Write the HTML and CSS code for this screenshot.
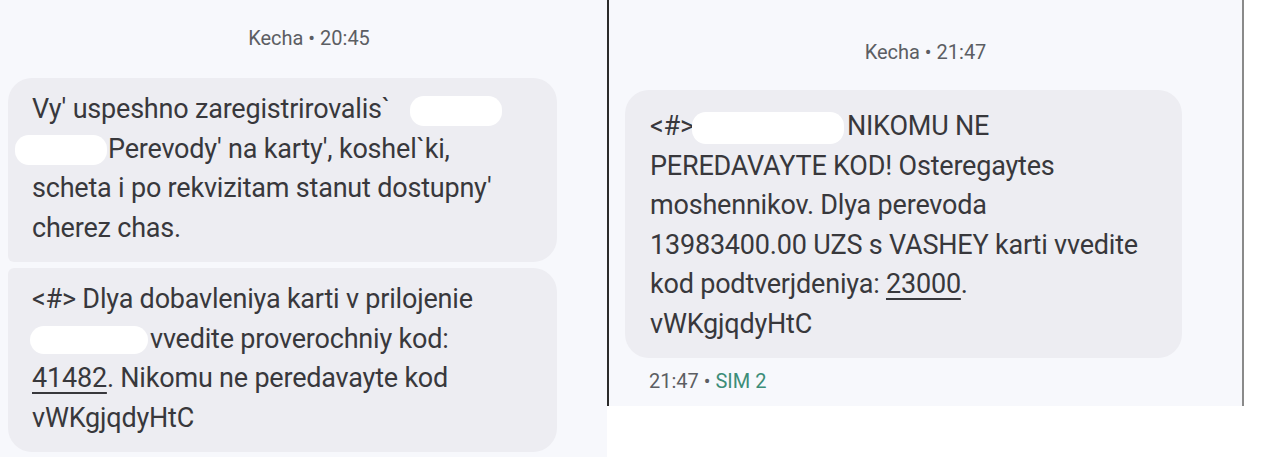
FILE: index.html
```html
<!DOCTYPE html>
<html>
<head>
<meta charset="utf-8">
<link rel="stylesheet" href="styles.css">
</head>
<body>
<div class="page">
  <section class="panel panel-left">
    <div class="stamp">Kecha • 20:45</div>
    <div class="bubble first">
      <div class="line">Vy' uspeshno zaregistrirovalis`<span class="blob blob-a"></span></div>
      <div class="line"><span class="blob blob-b"></span>Perevody' na karty', koshel`ki,</div>
      <div class="line">scheta i po rekvizitam stanut dostupny'</div>
      <div class="line">cherez chas.</div>
    </div>
    <div class="bubble last">
      <div class="line">&lt;#&gt; Dlya dobavleniya karti v prilojenie</div>
      <div class="line"><span class="blob blob-c"></span>vvedite proverochniy kod:</div>
      <div class="line"><span class="code">41482</span>. Nikomu ne peredavayte kod</div>
      <div class="line">vWKgjqdyHtC</div>
    </div>
  </section>
  <section class="panel panel-right">
    <div class="stamp stamp-right">Kecha • 21:47</div>
    <div class="bubble single">
      <div class="line">&lt;#&gt;<span class="blob blob-d"></span>NIKOMU NE</div>
      <div class="line">PEREDAVAYTE KOD! Osteregaytes</div>
      <div class="line">moshennikov. Dlya perevoda</div>
      <div class="line">13983400.00 UZS s VASHEY karti vvedite</div>
      <div class="line">kod podtverjdeniya: <span class="code">23000</span>.</div>
      <div class="line">vWKgjqdyHtC</div>
    </div>
    <div class="meta">21:47 • <span class="sim">SIM 2</span></div>
  </section>
</div>
</body>
</html>
```

FILE: styles.css
```css
* { box-sizing: border-box; }
html, body { margin: 0; padding: 0; background: #ffffff; }
body {
  font-family: Roboto, "Liberation Sans", sans-serif;
  color: #38383c;
}
.page {
  display: flex;
  align-items: flex-start;
  width: 1280px;
  height: 457px;
  overflow: hidden;
}
.panel {
  background: #f7f8fc;
  display: flex;
  flex-direction: column;
}
.panel-left {
  width: 607px;
  height: 457px;
  padding: 26px 50px 0 8px;
}
.panel-right {
  width: 637px;
  height: 406px;
  border-left: 2px solid #2b2b2b;
  border-right: 2px solid #8a8a8a;
  padding: 40px 0 0 16px;
}
.stamp {
  font-size: 20px;
  line-height: 24px;
  color: #5c5e63;
  text-align: center;
  margin-bottom: 28px;
  padding-left: 53px;
}
.stamp-right {
  margin-bottom: 26px;
  padding-left: 0;
  padding-right: 16px;
}
.bubble {
  background: #ededf2;
  padding: 12px 24px 14px 24px;
  font-size: 27px;
  line-height: 39.5px;
  letter-spacing: -0.2px;
  width: 549px;
}
.first { border-radius: 24px 24px 24px 6px; }
.last { border-radius: 6px 24px 24px 24px; margin-top: 6px; }
.single {
  border-radius: 24px;
  width: 557px;
  padding: 17px 25px 14px 25px;
}
.line { white-space: nowrap; }
.blob {
  display: inline-block;
  background: #ffffff;
  border-radius: 14px;
  vertical-align: middle;
}
.blob-a { width: 92px; height: 30px; margin-left: 20px; }
.blob-b { width: 92px; height: 30px; margin-left: -17px; margin-right: 1px; }
.blob-c { width: 118px; height: 28px; margin-left: -2px; margin-right: 2px; }
.blob-d { width: 152px; height: 32px; margin-left: -2px; margin-right: 3px; }
.code {
  text-decoration: underline;
  text-decoration-thickness: 2px;
  text-underline-offset: 5px;
}
.meta {
  margin-top: 11px;
  padding-left: 24px;
  font-size: 20px;
  line-height: 24px;
  color: #5c5e63;
}
.sim { color: #3c8d78; }
```
